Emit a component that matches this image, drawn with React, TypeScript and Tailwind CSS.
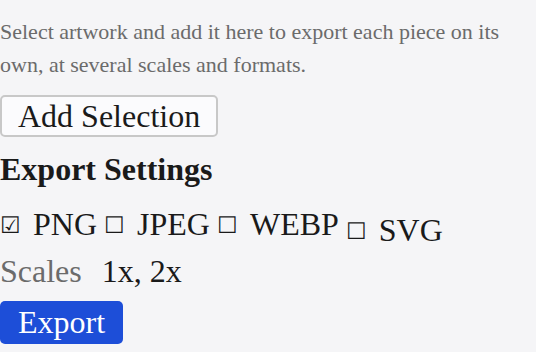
export default function App() {
  const formats = [
    { name: 'PNG', checked: true },
    { name: 'JPEG', checked: false },
    { name: 'WEBP', checked: false },
    { name: 'SVG', checked: false },
  ];

  return (
    <div className="min-h-screen bg-[#f5f5f7] pt-[15px] font-['Liberation_Serif',serif] text-[#1a1a1a]">
      <p className="text-[22px] leading-[33px] text-[#6b6b6b]">
        Select artwork and add it here to export each piece on its own, at several scales and formats.
      </p>

      <button className="mt-[14px] rounded-[5px] border-2 border-[#c8c8c8] bg-[#fbfbfd] px-[16px] text-[32px] leading-[38px]">
        Add Selection
      </button>

      <h2 className="mt-[12px] text-[32px] font-bold leading-[40px]">Export Settings</h2>

      <div className="mt-[15px] flex items-baseline text-[32px] leading-[40px]">
        {formats.map((f) => (
          <label
            key={f.name}
            className={`mr-[7px] flex items-baseline gap-[12px] ${f.name === 'SVG' ? 'relative top-[6px]' : ''}`}
          >
            <span className="relative top-[-2px] text-[23px]">{f.checked ? '☑' : '☐'}</span>
            <span>{f.name}</span>
          </label>
        ))}
      </div>

      <div className="mt-[3px] flex items-baseline gap-[20px] text-[32px] leading-[40px]">
        <span className="text-[#6b6b6b]">Scales</span>
        <span>1x, 2x</span>
      </div>

      <button className="mt-[10px] rounded-[5px] bg-[#1d4ed8] px-[18px] text-[32px] leading-[43px] text-white">
        Export
      </button>
    </div>
  );
}
